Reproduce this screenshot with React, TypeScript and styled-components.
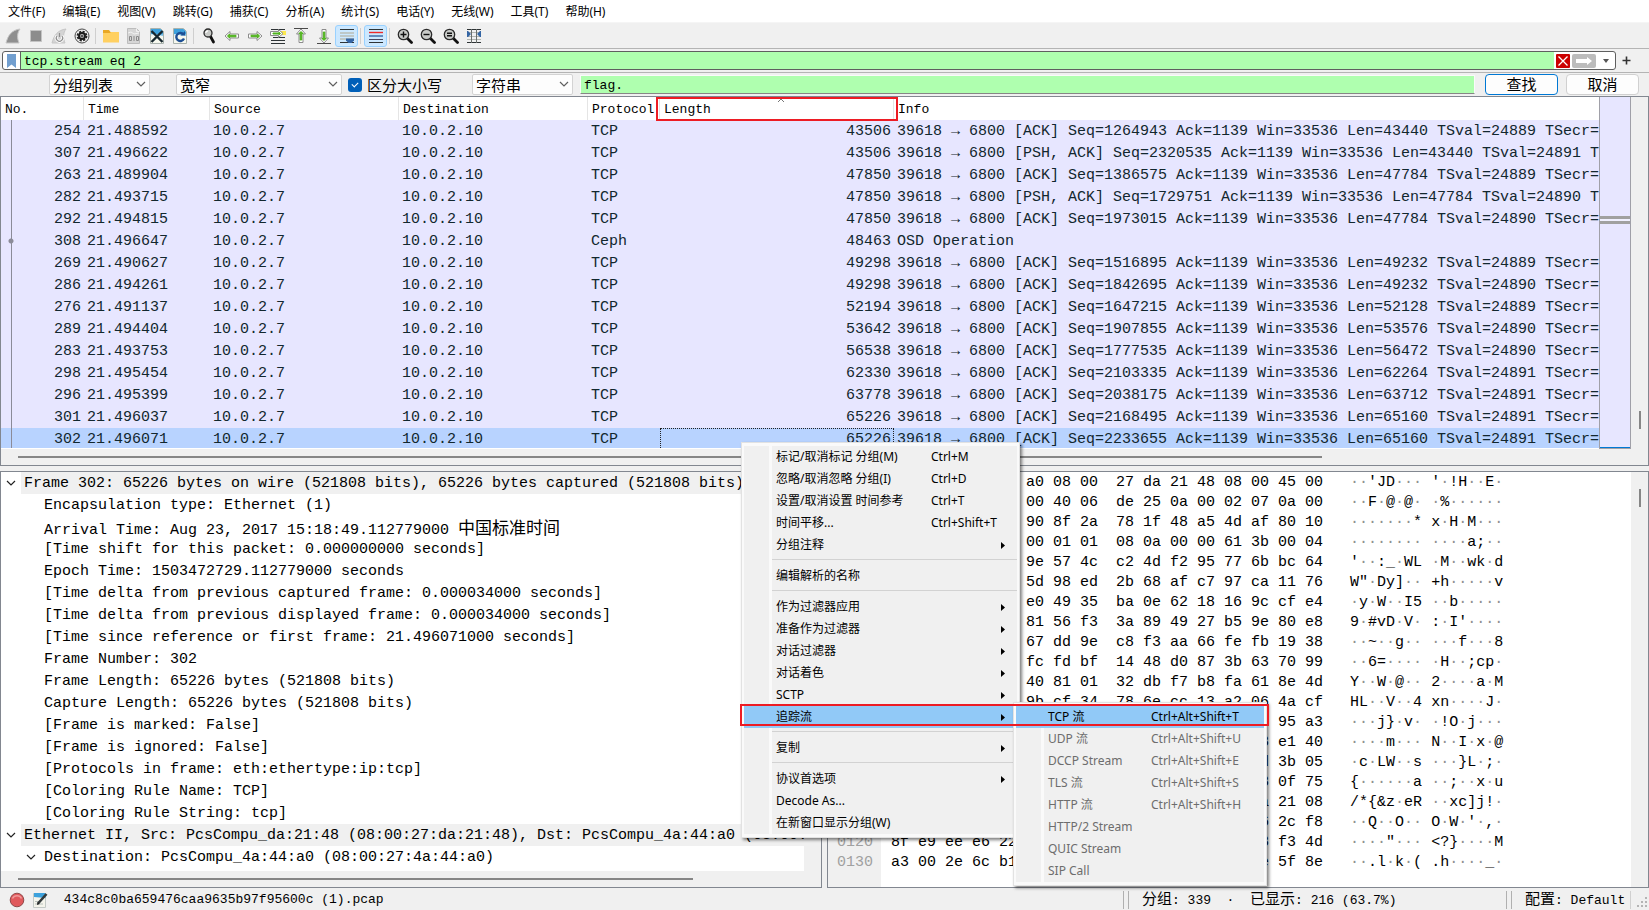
import React from "react";
import styled, { createGlobalStyle, css } from "styled-components";

const FRAME = "#828790";
const CHROME = "#f0f0f0";
const GREEN = "#afffaf";
const RED = "#ed1c24";

const mono = `"Liberation Mono", "Noto Sans CJK SC", monospace`;
const ui = `"Noto Sans", "Noto Sans CJK SC", sans-serif`;

const GlobalStyle = createGlobalStyle`
  *, *::before, *::after { box-sizing: border-box; }
  html, body, #root { height: 100%; }
  body { margin: 0; background: ${CHROME}; color: #000; overflow: hidden; }
  button, input, select { font: inherit; color: inherit; margin: 0; }
  ul { list-style: none; margin: 0; padding: 0; }
`;

const Window = styled.div`
  position: relative;
  display: flex;
  flex-direction: column;
  height: 100vh;
  background: ${CHROME};
  font: 13px/20px ${mono};
`;

const Cjk = styled.span<{ $size?: number }>`
  font-size: ${(p) => p.$size ?? 15}px;
  font-family: "Noto Sans CJK SC", sans-serif;
  line-height: 1;
`;

/* ---------- menu bar and toolbar ---------- */

const MenuBar = styled.nav`
  display: flex;
  height: 23px;
  background: #fff;
  border-bottom: 1px solid #f5f5f5;
`;

const MenuBarItem = styled.button`
  border: 0;
  background: none;
  padding: 1px 9px 0 8px;
  white-space: nowrap;
  font: 12px/21px ${ui};
`;

const Toolbar = styled.div`
  display: flex;
  align-items: center;
  height: 26px;
  padding: 0 1px;
  border-bottom: 1px solid #b4b4b4;
`;

const ToolButton = styled.button<{ $on?: boolean }>`
  display: flex;
  align-items: center;
  justify-content: center;
  width: 23px;
  height: 22px;
  padding: 0;
  border: 1px solid ${(p) => (p.$on ? "#99d1ff" : "transparent")};
  border-radius: 3px;
  background: ${(p) => (p.$on ? "#cce8ff" : "none")};
`;

const ToolSeparator = styled.span`
  width: 1px;
  height: 16px;
  margin: 0 3px 0 2px;
  background: #cfcfcf;
`;

/* ---------- display filter ---------- */

const FilterRow = styled.div`
  display: flex;
  align-items: center;
  height: 24px;
  padding: 0 11px 0 2px;
  border-bottom: 1px solid #b4b4b4;
`;

const FilterBox = styled.div`
  flex: 1;
  display: flex;
  align-items: center;
  height: 19px;
  border: 1px solid #5f5f5f;
  border-radius: 3px;
  background: #fff;
  overflow: hidden;
`;

const FilterButton = styled.button<{ $w: number }>`
  display: flex;
  align-items: center;
  justify-content: center;
  width: ${(p) => p.$w}px;
  height: 17px;
  padding: 0;
  border: 0;
  background: none;
`;

const FilterInput = styled.input`
  flex: 1;
  min-width: 0;
  height: 17px;
  padding: 2px 3px 0;
  border: 0;
  border-left: 1px solid #5f5f5f;
  background: ${GREEN};
  outline: 0;
`;

const PlusButton = styled.button`
  display: flex;
  width: 22px;
  padding: 0 0 0 5px;
  border: 0;
  background: none;
`;

/* ---------- find bar ---------- */

const FindRow = styled.div`
  display: flex;
  align-items: center;
  height: 23px;
  padding: 0 10px 0 49px;
`;

const SelectWrap = styled.span<{ $w: number; $gap: number }>`
  position: relative;
  width: ${(p) => p.$w}px;
  margin-right: ${(p) => p.$gap}px;
  height: 21px;

  svg {
    position: absolute;
    right: 4px;
    top: 7px;
    pointer-events: none;
  }
`;

const Select = styled.select`
  appearance: none;
  display: block;
  width: 100%;
  height: 21px;
  padding: 0 18px 0 3px;
  border: 1px solid #d3d3d3;
  border-radius: 2px;
  background: #fdfdfd;
  font: 15px/18px "Noto Sans CJK SC", sans-serif;
`;

const CheckLabel = styled.label`
  display: flex;
  align-items: center;
  gap: 5px;
  width: 124px;
  white-space: nowrap;
`;

const CheckBox = styled.input`
  appearance: none;
  position: relative;
  width: 14px;
  height: 14px;
  border-radius: 3px;
  background: #005fb8;

  &::before {
    content: "";
    position: absolute;
    left: 4px;
    top: 4px;
    width: 6px;
    height: 4px;
    border: solid #fff;
    border-width: 0 0 1px 1px;
    transform: rotate(-45deg);
  }
`;

const FindInput = styled.input`
  flex: 1;
  min-width: 0;
  height: 19px;
  margin: 0 10px 0 7px;
  padding: 2px 3px 0;
  border: 1px solid #fafafa;
  border-bottom: 1px solid #868686;
  background: ${GREEN};
  outline: 0;
`;

const PushButton = styled.button<{ $primary?: boolean }>`
  width: 73px;
  height: 21px;
  margin-left: ${(p) => (p.$primary ? 0 : 8)}px;
  padding: 0;
  border: 1px solid ${(p) => (p.$primary ? "#0078d4" : "#d0d0d0")};
  border-radius: 4px;
  background: #fdfdfd;
  line-height: 1;
`;

/* ---------- panes ---------- */

const Main = styled.main`
  flex: 1;
  min-height: 0;
  display: flex;
  flex-direction: column;
  gap: 5px;
`;

const PacketPane = styled.section`
  flex: 369 1 0;
  min-height: 0;
  display: flex;
  flex-direction: column;
  border: 1px solid ${FRAME};
`;

const LowerPanes = styled.div`
  flex: 418 1 0;
  min-height: 0;
  display: grid;
  grid-template-columns: minmax(0, 1fr) minmax(0, 1fr);
  gap: 5px;
`;

const PacketBody = styled.div`
  flex: 1;
  min-height: 0;
  display: flex;
`;

const PacketScroll = styled.div`
  flex: 1;
  min-width: 0;
  overflow: hidden;
  border-bottom: 1px solid #fff;
  background: #e7e6ff;
`;

const PacketTable = styled.table`
  width: 100%;
  table-layout: fixed;
  border-collapse: separate;
  border-spacing: 0;
`;

const HeadCell = styled.th`
  position: relative;
  height: 23px;
  padding: 2px 0 0 4px;
  background: #fff;
  border-right: 1px solid #e5e5e5;
  text-align: left;
  font: 13px/20px ${mono};
  white-space: nowrap;

  &:last-child {
    border-right: 0;
  }
`;

const SortMark = styled.svg`
  position: absolute;
  left: 50%;
  top: 1px;
`;

const HeaderMark = styled.span`
  position: absolute;
  z-index: 1;
  inset: 0 -5px -1px -4px;
  border: 2px solid ${RED};
`;

const Row = styled.tr<{ $selected?: boolean }>`
  background: ${(p) => (p.$selected ? "#b8d3ff" : "#e7e6ff")};
`;

const Cell = styled.td<{ $right?: boolean; $focus?: boolean }>`
  height: 22px;
  padding: 2px 3px 0;
  overflow: hidden;
  white-space: nowrap;
  text-align: ${(p) => (p.$right ? "right" : "left")};
  color: #12272e;
  font: 15px/20px ${mono};
  ${(p) =>
    p.$focus &&
    css`
      outline: 1px dotted #222;
      outline-offset: -1px;
    `}
`;

const NumberCell = styled(Cell)<{ $dot?: boolean }>`
  background-image: ${(p) =>
      p.$dot ? "radial-gradient(circle at 10px 11px, #8b8b98 2px, transparent 3px)," : ""}
    linear-gradient(to right, transparent 10px, #8b8b98 10px, #8b8b98 11px, transparent 11px);
`;

const MiniMap = styled.div`
  width: 32px;
  display: flex;
  flex-direction: column;
  border: solid #a0a0a8;
  border-width: 0 1px 1px;
  background: #e7e6ff;

  &::before {
    content: "";
    flex: 118 1 0;
  }

  &::after {
    content: "";
    flex: 222 1 0;
    border-bottom: 1px solid #0078d4;
  }
`;

const MiniMark = styled.span`
  height: 8px;
  border: solid #a0a0a0;
  border-width: 3px 0;
  background: #f0f0ff;
`;

const VScroll = styled.div`
  width: 17px;
  display: flex;
  justify-content: center;
  background: ${CHROME};
`;

const VThumb = styled.span<{ $top: number }>`
  width: 2px;
  height: 18px;
  margin-top: ${(p) => p.$top}px;
  background: #868686;
`;

const HScroll = styled.div`
  height: 16px;
  display: flex;
  align-items: center;
  padding-left: 17px;
  background: ${CHROME};
`;

const HThumb = styled.span<{ $w: number }>`
  width: ${(p) => p.$w}%;
  height: 2px;
  background: #868686;
`;

const DetailPane = styled.section`
  display: flex;
  flex-direction: column;
  min-height: 0;
  border: 1px solid ${FRAME};
`;

const DetailBody = styled.div`
  flex: 1;
  min-height: 0;
  display: flex;
`;

const Tree = styled.ul`
  flex: 1;
  min-width: 0;
  overflow: hidden;
  background: #fff;
`;

const TreeRow = styled.li<{ $level: number }>`
  display: flex;
  align-items: center;
  height: 22px;
  padding-left: ${(p) => p.$level * 20}px;
  white-space: pre;
  font: 15px/20px ${mono};
`;

const Twisty = styled.button`
  flex: none;
  display: flex;
  align-items: center;
  justify-content: center;
  width: 20px;
  height: 22px;
  padding: 0;
  border: 0;
  background: none;
`;

const TreeText = styled.span<{ $head?: boolean }>`
  flex: 1;
  min-width: 0;
  height: 22px;
  padding: 2px 0 0 3px;
  background: ${(p) => (p.$head ? CHROME : "none")};
`;

const HexPane = styled.section`
  display: flex;
  min-height: 0;
  overflow: hidden;
  border: 1px solid ${FRAME};
`;

const HexBody = styled.div`
  flex: 1;
  min-width: 0;
  overflow: hidden;
  padding-top: 1px;
  background: linear-gradient(to right, ${CHROME} 53px, #fff 53px);
`;

const HexTable = styled.table`
  border-collapse: collapse;
  white-space: pre;
  font: 15px/20px ${mono};
`;

const HexCell = styled.td<{ $w?: number; $dim?: boolean }>`
  height: 20px;
  min-width: ${(p) => p.$w ?? 0}px;
  padding: 0 0 0 9px;
  color: ${(p) => (p.$dim ? "#a0a0a0" : "#000")};
`;

const AsciiCell = styled.td`
  padding: 0;
`;

const Dot = styled.span`
  color: #909090;
`;

/* ---------- context menu ---------- */

const MenuPanel = styled.div<{ $w: number }>`
  position: absolute;
  width: ${(p) => p.$w}px;
  padding: 3px 2px;
  border: 1px solid #e2e2e2;
  background: #fafafa;
  box-shadow: 2px 2px 3px rgba(0, 0, 0, 0.5);
  font: 12px/22px ${ui};
`;

const ContextMenu = styled(MenuPanel)`
  left: 741px;
  top: 442px;
  z-index: 2;
`;

const SubMenu = styled(MenuPanel)`
  left: 269px;
  top: -4px;
`;

const MenuList = styled.ul`
  background: linear-gradient(to right, ${CHROME} 25px, #fafafa 25px, #fafafa 28px, ${CHROME} 28px);
`;

const MenuEntry = styled.li`
  position: relative;
`;

const MenuButton = styled.button<{ $label: number; $active?: boolean }>`
  display: grid;
  grid-template-columns: ${(p) => p.$label}px 1fr 6px;
  align-items: center;
  width: 100%;
  height: 22px;
  padding: 0 10px 0 32px;
  border: 0;
  text-align: left;
  white-space: nowrap;
  background: ${(p) => (p.$active ? "#91c9f7" : "none")};

  &:disabled {
    color: #6d6d6d;
  }
`;

const MenuLine = styled.li`
  height: 9px;
  padding: 3px 0 0 28px;

  &::before {
    content: "";
    display: block;
    border-top: 1px solid #d2d2d2;
  }
`;

const EntryMark = styled.span`
  position: absolute;
  z-index: 1;
  left: -4px;
  top: -2px;
  width: 529px;
  height: 22px;
  border: 2px solid ${RED};
  pointer-events: none;
`;

/* ---------- status bar ---------- */

const StatusBar = styled.footer`
  display: flex;
  align-items: center;
  height: 22px;
  padding: 2px 0 0 9px;
  white-space: pre;
`;

const StatusButton = styled.button`
  display: flex;
  width: 16px;
  height: 16px;
  margin-right: 7px;
  padding: 0;
  border: 0;
  background: none;
`;

const StatusText = styled.span<{ $w?: string }>`
  flex: ${(p) => (p.$w ? `0 0 ${p.$w}` : "1")};
  padding-left: 1px;
`;

const StatusGrip = styled.span`
  width: 6px;
  height: 18px;
  margin-right: 12px;
  border: solid #b0b0b0;
  border-width: 0 1px;
`;

const StatusEdge = styled.span`
  display: flex;
  align-items: flex-end;
  justify-content: flex-end;
  width: 19px;
  height: 18px;
  border-left: 1px solid #d0d0d0;
`;

/* ---------- drawings ---------- */

const Icon = ({ children, size = 16 }: { children: React.ReactNode; size?: number }) => (
  <svg width={size} height={size} viewBox="0 0 16 16" fill="none" aria-hidden="true">
    {children}
  </svg>
);

const Fin = ({ restart }: { restart?: boolean }) => (
  <Icon>
    <path d="M1 15C3 7 7 2 15 1C12 5 12 10 14 15Z" fill={restart ? "#d4d4d4" : "#8f8f8f"} stroke="#c6c6c6" />
    {restart && <path d="M6 8a3.200 3.200 0 1 0 5 0" stroke="#fff" strokeWidth="3" />}
    {restart && <path d="M6 8a3.200 3.200 0 1 0 5 0M8.500 5v4" stroke="#8f8f8f" strokeWidth="1.200" />}
  </Icon>
);

const Gear = () => (
  <Icon>
    <circle cx="8" cy="8" r="7" fill="#f2f2f2" stroke="#4a4a4a" />
    <circle cx="8" cy="8" r="4.500" stroke="#222" strokeWidth="1.800" strokeDasharray="2.200 1.334" />
    <circle cx="8" cy="8" r="3" stroke="#1c1c1c" strokeWidth="2" />
    <circle cx="8" cy="8" r="1.600" fill="#555" />
  </Icon>
);

const Page = ({ kind }: { kind: "save" | "close" | "reload" }) => (
  <Icon>
    {kind === "save" ? (
      <>
        <path d="M1.500.500h9l3 3v12h-12z" fill="#d6d6d6" stroke="#bdbdbd" />
        <path d="M10.500.500v3h3M2 5l3-1 3 2 5-1" stroke="#f2f2f2" />
        <path d="M3.500 8.500h2v4h-2zM8 8v5M10.500 8.500h2v4h-2z" stroke="#8a8a8a" />
      </>
    ) : (
      <>
        <path d="M1.500.500h10l3 3v12h-13z" fill="#f6f8ee" stroke="#a9b2ad" />
        <path d="M2 1h9.500l2.500 2.500V8L2 6z" fill="#3da1dc" />
        <path d="M2 7l4-1 4 1.500 4-.5" stroke="#bfe3f6" />
      </>
    )}
    {kind === "close" && <path d="M2.500 3l11 11M13.500 3l-11 11" stroke="#16262e" strokeWidth="2.400" />}
    {kind === "reload" && (
      <>
        <path d="M11.500 6.500A4 4 0 1 0 12 10.500" stroke="#1d4f94" strokeWidth="2.400" />
        <path d="M8.500 7.500H13V3z" fill="#1d4f94" />
      </>
    )}
  </Icon>
);

const Folder = () => (
  <Icon>
    <path d="M0 2h6l1.500 2H16v10H0z" fill="#e9a825" />
    <path d="M0 5h7l1-1h8v10.500H0z" fill="#ffd061" />
  </Icon>
);

const arrow = { fill: "#fff", stroke: "#8c8c8c" };
const arrowPath = "M1 8l5-4.500v2.500h8.500v4H6v2.500z";
const corePath = "M3.500 8L5.500 6v1.300h6.500v1.500H5.500V10z";

const Arrow = ({ turn = 0, bar }: { turn?: number; bar?: string }) => (
  <Icon>
    <g transform={`rotate(${turn} 8 8)`}>
      <path d={arrowPath} {...arrow} />
      <path d={corePath} fill="#4fb31c" stroke="#4fb31c" />
    </g>
    {bar && <path d={bar} stroke="#4a4a4a" />}
  </Icon>
);

const GoTo = () => (
  <Icon>
    <path d="M1 1.500h14M3 9.500h12M1 12.500h14M1 15.500h14" stroke="#2e3436" />
    <path d="M11 3h5v4h-5z" fill="#fce94f" />
    <path d="M13 5.500L8.500 1.500v2H.5v4h8v2z" {...arrow} />
    <path d="M10.500 5.500L9 4.200v.8H3v1h6v.8z" fill="#4fb31c" stroke="#4fb31c" />
  </Icon>
);

const AutoScroll = () => (
  <Icon>
    <path d="M1 1.500h14M1 14.500h14" stroke="#2e3436" />
    <path d="M1 5h14M1 8h14M1 11h14" stroke="#b9bdb6" strokeWidth="1.400" />
    <path d="M7 10.500h8v2l-2.500 2.500h-3L7 12.500z" fill="#3465a4" />
  </Icon>
);

const Colorize = () => (
  <Icon>
    <path d="M1 1.500h14M1 14.500h14" stroke="#2e3436" />
    <path d="M1 4.500h14" stroke="#ef2929" strokeWidth="1.400" />
    <path d="M1 8h14" stroke="#3465a4" strokeWidth="1.400" />
    <path d="M1 11.500h14" stroke="#4a4560" />
  </Icon>
);

const Lens = ({ mark }: { mark?: string }) => (
  <Icon>
    <path d={mark ? "M10 10l4.500 4.500" : "M9.500 8.500l3 5.500"} stroke="#111" strokeWidth="2.800" strokeLinecap="round" />
    <circle cx={mark ? 6.5 : 7} cy={mark ? 6.5 : 5} r={mark ? 5.2 : 4} fill="#c9cbc8" stroke="#2b2b2b" strokeWidth="1.300" />
    {mark ? (
      <path d={mark} stroke="#111" strokeWidth="1.400" />
    ) : (
      <path d="M4.800 5a2.200 2.200 0 0 1 2.200-2.200" stroke="#fff" strokeWidth="1.300" />
    )}
  </Icon>
);

const Columns = () => (
  <Icon>
    <path d="M1 1.500h14M1 14.500h14" stroke="#2e3436" />
    <path d="M1 8.500h14M1 11.500h14M1 4.500h14" stroke="#b0b4b0" />
    <path d="M5.500 1v14M10.500 1v14" stroke="#6a6f6c" />
    <path d="M1 3h1l3 3-3 3H1zM15 3h-1l-3 3 3 3h1z" fill="#3465a4" />
  </Icon>
);

const Chevron = ({ color = "#5f5f5f" }: { color?: string }) => (
  <svg width="10" height="7" viewBox="0 0 10 7" fill="none" aria-hidden="true">
    <path d="M1 1l4 4 4-4" stroke={color} strokeWidth="1.200" />
  </svg>
);

const RightMark = () => (
  <svg width="4" height="7" viewBox="0 0 4 7" aria-hidden="true">
    <path d="M0 0l4 3.500L0 7z" fill="#000" />
  </svg>
);

/* ---------- data ---------- */

const menus = ["文件(F)", "编辑(E)", "视图(V)", "跳转(G)", "捕获(C)", "分析(A)", "统计(S)", "电话(Y)", "无线(W)", "工具(T)", "帮助(H)"];

const tools: (null | { name: string; icon: React.ReactNode; on?: boolean })[] = [
  { name: "Start", icon: <Fin /> },
  { name: "Stop", icon: <Icon><path d="M2.500 2.500h11v11h-11z" fill="#8c8c8c" stroke="#c4c4c4" /></Icon> },
  { name: "Restart", icon: <Fin restart /> },
  { name: "Options", icon: <Gear /> },
  null,
  { name: "Open", icon: <Folder /> },
  { name: "Save", icon: <Page kind="save" /> },
  { name: "Close", icon: <Page kind="close" /> },
  { name: "Reload", icon: <Page kind="reload" /> },
  null,
  { name: "Find", icon: <Lens /> },
  { name: "Back", icon: <Arrow /> },
  { name: "Forward", icon: <Arrow turn={180} /> },
  { name: "Go to packet", icon: <GoTo /> },
  { name: "First packet", icon: <Arrow turn={90} bar="M1 .5h14" /> },
  { name: "Last packet", icon: <Arrow turn={270} bar="M1 15.500h14" /> },
  { name: "Auto scroll", icon: <AutoScroll />, on: true },
  null,
  { name: "Colorize", icon: <Colorize />, on: true },
  null,
  { name: "Zoom in", icon: <Lens mark="M3.500 6.500h6M6.500 3.500v6" /> },
  { name: "Zoom out", icon: <Lens mark="M3.500 6.500h6" /> },
  { name: "Normal size", icon: <Lens mark="M4 5.300h5M4 7.800h5" /> },
  { name: "Resize columns", icon: <Columns /> },
];

const ack = (seq: number, len: number, ts: number) =>
  `39618 → 6800 [ACK] Seq=${seq} Ack=1139 Win=33536 Len=${len} TSval=${ts} TSecr=`;
const psh = (seq: number, len: number, ts: number) =>
  `39618 → 6800 [PSH, ACK] Seq=${seq} Ack=1139 Win=33536 Len=${len} TSval=${ts} T`;

const packets: [number, string, string, number, string][] = [
  [254, "21.488592", "TCP", 43506, ack(1264943, 43440, 24889)],
  [307, "21.496622", "TCP", 43506, psh(2320535, 43440, 24891)],
  [263, "21.489904", "TCP", 47850, ack(1386575, 47784, 24889)],
  [282, "21.493715", "TCP", 47850, psh(1729751, 47784, 24890)],
  [292, "21.494815", "TCP", 47850, ack(1973015, 47784, 24890)],
  [308, "21.496647", "Ceph", 48463, "OSD Operation"],
  [269, "21.490627", "TCP", 49298, ack(1516895, 49232, 24889)],
  [286, "21.494261", "TCP", 49298, ack(1842695, 49232, 24890)],
  [276, "21.491137", "TCP", 52194, ack(1647215, 52128, 24889)],
  [289, "21.494404", "TCP", 53642, ack(1907855, 53576, 24890)],
  [283, "21.493753", "TCP", 56538, ack(1777535, 56472, 24890)],
  [298, "21.495454", "TCP", 62330, ack(2103335, 62264, 24891)],
  [296, "21.495399", "TCP", 63778, ack(2038175, 63712, 24891)],
  [301, "21.496037", "TCP", 65226, ack(2168495, 65160, 24891)],
  [302, "21.496071", "TCP", 65226, ack(2233655, 65160, 24891)],
];

const details: { level: number; open?: boolean; head?: boolean; text: React.ReactNode }[] = [
  { level: 0, open: true, head: true, text: "Frame 302: 65226 bytes on wire (521808 bits), 65226 bytes captured (521808 bits)" },
  { level: 1, text: "Encapsulation type: Ethernet (1)" },
  { level: 1, text: <>Arrival Time: Aug 23, 2017 15:18:49.112779000 <Cjk $size={17}>中国标准时间</Cjk></> },
  { level: 1, text: "[Time shift for this packet: 0.000000000 seconds]" },
  { level: 1, text: "Epoch Time: 1503472729.112779000 seconds" },
  { level: 1, text: "[Time delta from previous captured frame: 0.000034000 seconds]" },
  { level: 1, text: "[Time delta from previous displayed frame: 0.000034000 seconds]" },
  { level: 1, text: "[Time since reference or first frame: 21.496071000 seconds]" },
  { level: 1, text: "Frame Number: 302" },
  { level: 1, text: "Frame Length: 65226 bytes (521808 bits)" },
  { level: 1, text: "Capture Length: 65226 bytes (521808 bits)" },
  { level: 1, text: "[Frame is marked: False]" },
  { level: 1, text: "[Frame is ignored: False]" },
  { level: 1, text: "[Protocols in frame: eth:ethertype:ip:tcp]" },
  { level: 1, text: "[Coloring Rule Name: TCP]" },
  { level: 1, text: "[Coloring Rule String: tcp]" },
  { level: 0, open: true, head: true, text: "Ethernet II, Src: PcsCompu_da:21:48 (08:00:27:da:21:48), Dst: PcsCompu_4a:44:a0 (08:00:27:4a:44:a0)" },
  { level: 1, open: true, text: "Destination: PcsCompu_4a:44:a0 (08:00:27:4a:44:a0)" },
];

const dump = [
  "08 00 27 4a 44 a0 08 00 27 da 21 48 08 00 45 00",
  "fe bc 46 b4 40 00 40 06 de 25 0a 00 02 07 0a 00",
  "02 0a 9a c2 1a 90 8f 2a 78 1f 48 a5 4d af 80 10",
  "01 06 9b 9c 00 00 01 01 08 0a 00 00 61 3b 00 04",
  "27 b4 8d 3a 5f 9e 57 4c c2 4d f2 95 77 6b bc 64",
  "57 22 e1 44 79 5d 98 ed 2b 68 af c7 97 ca 11 76",
  "c3 79 9a 57 f0 e0 49 35 ba 0e 62 18 16 9c cf e4",
  "39 c6 23 76 44 81 56 f3 3a 89 49 27 b5 9e 80 e8",
  "d8 05 7e 91 ba 67 dd 9e c8 f3 aa 66 fe fb 19 38",
  "8a 1d 36 3d e7 fc fd bf 14 48 d0 87 3b 63 70 99",
  "59 b0 0c 57 d9 40 81 01 32 db f7 b8 fa 61 8e 4d",
  "48 4c e5 93 56 9b cf 34 78 6e cc 13 a2 06 4a cf",
  "9c 02 d1 6a 7d 88 76 f5 c9 21 4f 1b 6a bb 95 a3",
  "a5 e8 13 c0 6d 9f 0b d4 4e 8b f6 49 91 78 e1 40",
  "1e 63 b9 4c 57 ea 84 73 d2 0f a7 7d 4c 9d 3b 05",
  "7b d5 8c 16 f9 e3 a0 61 b2 04 3b cd 97 78 0f 75",
  "2f 2a 7b 26 7a c4 65 52 8e f1 78 63 5d 6a 21 08",
  "93 ee 51 0a d7 4f b6 1c 4f 80 57 e2 27 86 2c f8",
  "8f e9 ee e6 22 a1 d3 07 3c 3f 7d c8 90 f8 f3 4d",
  "a3 00 2e 6c b1 6b 9a 28 2e 68 c5 f7 0d 8e 5f 8e",
];

type Entry = null | { label: string; keys?: string; more?: boolean; stream?: boolean };

const entries: Entry[] = [
  { label: "标记/取消标记 分组(M)", keys: "Ctrl+M" },
  { label: "忽略/取消忽略 分组(I)", keys: "Ctrl+D" },
  { label: "设置/取消设置 时间参考", keys: "Ctrl+T" },
  { label: "时间平移...", keys: "Ctrl+Shift+T" },
  { label: "分组注释", more: true },
  null,
  { label: "编辑解析的名称" },
  null,
  { label: "作为过滤器应用", more: true },
  { label: "准备作为过滤器", more: true },
  { label: "对话过滤器", more: true },
  { label: "对话着色", more: true },
  { label: "SCTP", more: true },
  { label: "追踪流", more: true, stream: true },
  null,
  { label: "复制", more: true },
  null,
  { label: "协议首选项", more: true },
  { label: "Decode As..." },
  { label: "在新窗口显示分组(W)" },
];

const streams: [string, string?][] = [
  ["TCP 流", "Ctrl+Alt+Shift+T"],
  ["UDP 流", "Ctrl+Alt+Shift+U"],
  ["DCCP Stream", "Ctrl+Alt+Shift+E"],
  ["TLS 流", "Ctrl+Alt+Shift+S"],
  ["HTTP 流", "Ctrl+Alt+Shift+H"],
  ["HTTP/2 Stream"],
  ["QUIC Stream"],
  ["SIP Call"],
];

/* ---------- parts ---------- */

const HexText = ({ line }: { line: string }) => {
  const bytes = line.split(" ");
  return <>{bytes.slice(0, 8).join(" ") + "  " + bytes.slice(8).join(" ")}</>;
};

const AsciiText = ({ line }: { line: string }) => (
  <>
    {line.split(" ").map((hex, i) => {
      const code = parseInt(hex, 16);
      const gap = i === 8 ? " " : "";
      return code > 32 && code < 127 ? gap + String.fromCharCode(code) : (
        <React.Fragment key={i}>{gap}<Dot>·</Dot></React.Fragment>
      );
    })}
  </>
);

const Combo = ({ label, value, w, gap }: { label: string; value: string; w: number; gap: number }) => (
  <SelectWrap $w={w} $gap={gap}>
    <Select aria-label={label} defaultValue={value}>
      <option>{value}</option>
    </Select>
    <Chevron />
  </SelectWrap>
);

const StreamMenu = () => (
  <SubMenu $w={254}>
    <MenuList role="menu">
      {streams.map(([label, keys], i) => (
        <MenuEntry key={label}>
          <MenuButton $label={103} $active={i === 0} disabled={i > 0} role="menuitem">
            <span>{label}</span>
            <span>{keys}</span>
          </MenuButton>
        </MenuEntry>
      ))}
    </MenuList>
  </SubMenu>
);

const PacketMenu = () => (
  <ContextMenu $w={279}>
    <MenuList role="menu">
      {entries.map((e, i) =>
        e ? (
          <MenuEntry key={i}>
            <MenuButton $label={155} $active={e.stream} role="menuitem">
              <span>{e.label}</span>
              <span>{e.keys}</span>
              {e.more && <RightMark />}
            </MenuButton>
            {e.stream && <StreamMenu />}
            {e.stream && <EntryMark />}
          </MenuEntry>
        ) : (
          <MenuLine key={i} role="separator" />
        )
      )}
    </MenuList>
  </ContextMenu>
);

export default function App() {
  return (
    <Window>
      <GlobalStyle />
      <MenuBar>
        {menus.map((m) => (
          <MenuBarItem key={m}>{m}</MenuBarItem>
        ))}
      </MenuBar>
      <Toolbar>
        {tools.map((t, i) =>
          t ? (
            <ToolButton key={i} $on={t.on} aria-label={t.name}>
              {t.icon}
            </ToolButton>
          ) : (
            <ToolSeparator key={i} />
          )
        )}
      </Toolbar>
      <FilterRow>
        <FilterBox>
          <FilterButton $w={17} aria-label="Bookmarks">
            <svg width="9" height="14" viewBox="0 0 9 14" aria-hidden="true">
              <path d="M0 0h9v14L4.500 10.500 0 14z" fill="#729fcf" />
            </svg>
          </FilterButton>
          <FilterInput aria-label="Display filter" defaultValue="tcp.stream eq 2" />
          <FilterButton $w={17} aria-label="Clear">
            <svg width="14" height="14" viewBox="0 0 14 14" fill="none" aria-hidden="true">
              <rect width="14" height="14" rx="1" fill="#cc0000" />
              <path d="M2.500 2.500l9 9M11.500 2.500l-9 9" stroke="#fff" strokeWidth="1.300" />
            </svg>
          </FilterButton>
          <FilterButton $w={26} aria-label="Apply">
            <svg width="24" height="14" viewBox="0 0 24 14" aria-hidden="true">
              <rect width="24" height="14" rx="2" fill="#bcbcbc" />
              <path d="M4 5h11V3l5 4-5 4V9H4z" fill="#fff" />
            </svg>
          </FilterButton>
          <FilterButton $w={18} aria-label="Recent filters">
            <svg width="6" height="4" viewBox="0 0 6 4" aria-hidden="true">
              <path d="M0 0h6L3 4z" fill="#555" />
            </svg>
          </FilterButton>
        </FilterBox>
        <PlusButton aria-label="Add filter button">
          <svg width="11" height="11" viewBox="0 0 11 11" aria-hidden="true">
            <path d="M1.500 5.500h8M5.500 1.500v8" stroke="#333" strokeWidth="1.600" />
          </svg>
        </PlusButton>
      </FilterRow>
      <FindRow>
        <Combo label="Search in" value="分组列表" w={101} gap={26} />
        <Combo label="Character width" value="宽窄" w={166} gap={6} />
        <CheckLabel>
          <CheckBox type="checkbox" defaultChecked />
          <Cjk>区分大小写</Cjk>
        </CheckLabel>
        <Combo label="Search type" value="字符串" w={101} gap={0} />
        <FindInput aria-label="Search text" defaultValue="flag." />
        <PushButton $primary>
          <Cjk>查找</Cjk>
        </PushButton>
        <PushButton>
          <Cjk>取消</Cjk>
        </PushButton>
      </FindRow>
      <Main>
        <PacketPane>
          <PacketBody>
            <PacketScroll>
              <PacketTable>
                <colgroup>
                  <col width="83" />
                  <col width="126" />
                  <col width="189" />
                  <col width="189" />
                  <col width="72" />
                  <col width="234" />
                  <col />
                </colgroup>
                <thead>
                  <tr>
                    <HeadCell>No.</HeadCell>
                    <HeadCell>Time</HeadCell>
                    <HeadCell>Source</HeadCell>
                    <HeadCell>Destination</HeadCell>
                    <HeadCell>Protocol</HeadCell>
                    <HeadCell>
                      Length
                      <SortMark width="8" height="5" viewBox="0 0 8 5" fill="none" aria-hidden="true">
                        <path d="M1 4l3-3 3 3" stroke="#777" />
                      </SortMark>
                      <HeaderMark />
                    </HeadCell>
                    <HeadCell>Info</HeadCell>
                  </tr>
                </thead>
                <tbody>
                  {packets.map(([no, time, proto, length, info]) => (
                    <Row key={no} $selected={no === 302}>
                      <NumberCell $right $dot={no === 308}>{no}</NumberCell>
                      <Cell>{time}</Cell>
                      <Cell>10.0.2.7</Cell>
                      <Cell>10.0.2.10</Cell>
                      <Cell>{proto}</Cell>
                      <Cell $right $focus={no === 302}>{length}</Cell>
                      <Cell>{info}</Cell>
                    </Row>
                  ))}
                </tbody>
              </PacketTable>
            </PacketScroll>
            <MiniMap>
              <MiniMark />
            </MiniMap>
            <VScroll>
              <VThumb $top={314} />
            </VScroll>
          </PacketBody>
          <HScroll>
            <HThumb $w={80} />
          </HScroll>
        </PacketPane>
        <LowerPanes>
          <DetailPane>
            <DetailBody>
              <Tree>
                {details.map((d, i) => (
                  <TreeRow key={i} $level={d.level}>
                    {d.open ? (
                      <Twisty aria-label="Collapse">
                        <Chevron color="#222" />
                      </Twisty>
                    ) : (
                      <Twisty as="span" />
                    )}
                    <TreeText $head={d.head}>{d.text}</TreeText>
                  </TreeRow>
                ))}
              </Tree>
              <VScroll />
            </DetailBody>
            <HScroll>
              <HThumb $w={84} />
            </HScroll>
          </DetailPane>
          <HexPane>
            <HexBody>
              <HexTable>
                <tbody>
                  {dump.map((line, i) => (
                    <tr key={i}>
                      <HexCell $w={54} $dim>{(i * 16).toString(16).padStart(4, "0")}</HexCell>
                      <HexCell $w={468}><HexText line={line} /></HexCell>
                      <AsciiCell><AsciiText line={line} /></AsciiCell>
                    </tr>
                  ))}
                </tbody>
              </HexTable>
            </HexBody>
            <VScroll>
              <VThumb $top={17} />
            </VScroll>
          </HexPane>
        </LowerPanes>
      </Main>
      <StatusBar>
        <StatusButton aria-label="Expert information">
          <Icon>
            <circle cx="8" cy="8" r="6.800" fill="#e0595c" stroke="#8f4a4a" />
            <path d="M3.500 6.500a5 5 0 0 1 9 0" stroke="#ef9a9a" strokeWidth="1.500" />
          </Icon>
        </StatusButton>
        <StatusButton aria-label="Capture comment">
          <Icon>
            <path d="M1.500 1.500h12v14h-12z" fill="#f4f4ec" stroke="#c3c9c6" />
            <path d="M2 1h11.500v5L2 5z" fill="#3da1dc" />
            <path d="M3 9.500h6M3 12h8" stroke="#b8c0bc" />
            <path d="M6 11.500L14.500 2" stroke="#33393b" strokeWidth="2.600" />
            <path d="M5 13l.500-2.500 2 1.500z" fill="#111" />
          </Icon>
        </StatusButton>
        <StatusText>{" 434c8c0ba659476caa9635b97f95600c (1).pcap"}</StatusText>
        <StatusGrip />
        <StatusText $w="365px">
          <Cjk>分组</Cjk>{": 339  ·  "}<Cjk>已显示</Cjk>{": 216 (63.7%)"}
        </StatusText>
        <StatusGrip />
        <StatusText $w="106px">
          <Cjk>配置</Cjk>{": Default"}
        </StatusText>
        <StatusEdge>
          <svg width="12" height="12" viewBox="0 0 12 12" fill="#b4b4b4" aria-hidden="true">
            <path d="M8 0h2v2H8zM4 4h2v2H4zM8 4h2v2H8zM0 8h2v2H0zM4 8h2v2H4zM8 8h2v2H8z" />
          </svg>
        </StatusEdge>
      </StatusBar>
      <PacketMenu />
    </Window>
  );
}
